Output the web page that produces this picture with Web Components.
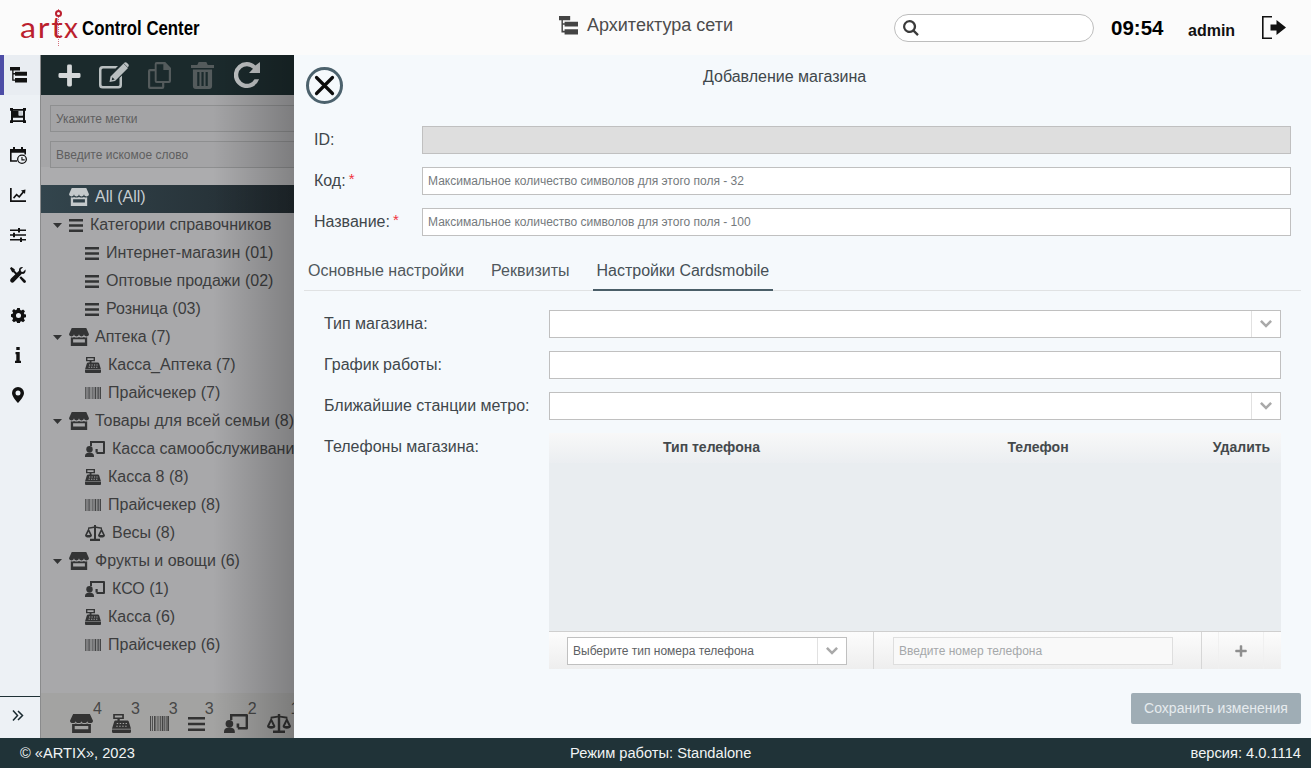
<!DOCTYPE html>
<html lang="ru">
<head>
<meta charset="utf-8">
<title>Artix Control Center</title>
<style>
  html, body { margin: 0; height: 100%; overflow: hidden; font-family: "Liberation Sans", Arial, sans-serif; }
</style>
</head>
<body>
<app-shell></app-shell>
<script>
const ICONS = {
  tree: ['0 0 17 16', '<path d="M0 0h10v3.600H3.500v2.400H5V4.800h12v4H5V7.400H3.500v5H5v-1.300h12V15.600H5v-1.800H2.200V3.600H0z"/>'],
  frame: ['0 0 16 16', '<path fill-rule="evenodd" d="M0 0h3v1h10V0h3v3h-1v10h1v3h-3v-1H3v1H0v-3h1V3H0zM3 3v10h10V3z"/><path d="M3 3h5.500v5H13v2.500H3z"/><path d="M9 3.500h3.500V8H9z" fill="#c9ced3"/>'],
  calendar: ['0 0 17 18', '<path d="M3 0h2v2h6V0h2v2h3v6h-1.600V6H1.600v8H7v1.600H0V2h3z"/><path fill-rule="evenodd" d="M12 8a5 5 0 1 1 0 10 5 5 0 0 1 0-10zm0 1.300a3.700 3.700 0 1 0 0 7.400 3.700 3.700 0 0 0 0-7.400z"/><path d="M11.400 10.500h1.100v2.600h2.200v1.100h-3.300z"/>'],
  chart: ['0 0 16 14', '<path d="M0 0h1.700v12.300H16V14H0z"/><path d="M3 9.500 6.500 5.500l2.600 2.200 3.300-3.900L11 2.500 15.500 1.600 15 6l-1.200-1.200-4.500 5.200-2.600-2.200-2.600 3z"/>'],
  sliders: ['0 0 16 14', '<path d="M0 1.500h8V0h2v1.500h6v1.600h-6v1.500H8V3.100H0zM0 6.200h3V4.700h2v1.500h11v1.600H5v1.500H3V7.800H0zM0 10.900h10V9.400h2v1.500h4v1.600h-4V14h-2v-1.500H0z"/>'],
  tools: ['0 0 16 16', '<path d="M0 1.300 1.300 0l3.400 2.200v1.600l3 3-1.400 1.400-3-3H2.200z"/><path d="M15.400 2.600 13 5l-2-.4L10.600 2.600 13 .2C11-.4 8.600 1 9 3.800L1 11.600C0 12.600-.2 14 .8 15s2.300.8 3.300-.2l7.800-8c2.800.6 4.200-2 3.500-4.200z"/><path d="M9.400 10.800 11 9.200l4.500 4.300c.6.600.6 1.400 0 2s-1.400.6-2 0z"/>'],
  gear: ['0 0 16 16', '<path fill-rule="evenodd" d="M6.600 0h2.800l.4 2.100 1.300.6 1.800-1.200 2 2-1.200 1.800.6 1.300 2.100.4v2.800l-2.100.4-.6 1.300 1.200 1.800-2 2-1.800-1.200-1.300.6-.4 2.100H6.600l-.4-2.100-1.300-.6-1.800 1.200-2-2 1.200-1.800-.6-1.300L0 9.400V6.600l1.700-.4.6-1.300-1.200-1.800 2-2 1.800 1.200 1.300-.6zM8 5.300a2.700 2.700 0 1 0 0 5.400 2.700 2.700 0 0 0 0-5.400z"/>'],
  info: ['0 0 6 16', '<path d="M1.300 0h3.400v3H1.300zM.5 5h4.200v8.800H6V16H0v-2.200h1.300V7.200H.5z"/>'],
  pin: ['0 0 12 16', '<path fill-rule="evenodd" d="M6 0a6 6 0 0 1 6 6c0 3-3.500 7.500-6 10C3.500 13.500 0 9 0 6a6 6 0 0 1 6-6zm0 3.500a2.500 2.500 0 1 0 0 5 2.500 2.500 0 0 0 0-5z"/>'],
  chevrons: ['0 0 12 11', '<path d="M1 .5 5.500 5.500 1 10.500M6 1 10.500 5.500 6 10" fill="none" stroke="currentColor" stroke-width="1.500"/>'],
  plus: ['0 0 24 24', '<path d="M9.500 2a1.500 1.500 0 0 1 1.500-1.500h2A1.500 1.500 0 0 1 14.500 2v7.500H22a1.500 1.500 0 0 1 1.500 1.500v2a1.500 1.500 0 0 1-1.500 1.500h-7.500V22a1.500 1.500 0 0 1-1.500 1.500h-2A1.500 1.500 0 0 1 9.500 22v-7.500H2A1.500 1.500 0 0 1 .5 13v-2A1.500 1.500 0 0 1 2 9.500h7.500z"/>'],
  edit: ['0 0 30 27', '<path d="M4 4h15l-2.500 2.500H4A1.500 1.500 0 0 0 2.500 8v14.500A1.500 1.500 0 0 0 4 24h15a1.500 1.500 0 0 0 1.500-1.500V16l2.500-2.500v9.500a3.500 3.500 0 0 1-3.500 3.500H3.500A3.500 3.500 0 0 1 0 23V7.500A3.500 3.500 0 0 1 3.500 4z"/><path d="M24.500 1.500 29 6 16 19l-5.500 1 1-5.500zM13.400 15.300l-.7 3 3-.7z"/><path d="M25.300.8c.8-.8 1.800-.8 2.500 0l1.500 1.500c.7.700.7 1.700 0 2.400l-.6.600-4-4z"/>'],
  copy: ['0 0 24 27', '<path fill-rule="evenodd" d="M9 0h9l6 6v13a2 2 0 0 1-2 2h-5v4a2 2 0 0 1-2 2H2a2 2 0 0 1-2-2V9a2 2 0 0 1 2-2h5V2a2 2 0 0 1 2-2zm0 2.300V19h12.700V8H16V2.300zM2.300 9.300V24.700h12.400V21H9a2 2 0 0 1-2-2V9.300z"/>'],
  trash: ['0 0 24 27', '<path fill-rule="evenodd" d="M8 0h8l1.500 3H24v3H0V3h6.500zM2 7.500h20V24a3 3 0 0 1-3 3H5a3 3 0 0 1-3-3zM6.500 10v14h2.300V10zm4.400 0v14h2.300V10zm4.300 0v14h2.300V10z"/>'],
  redo: ['0 0 26 26', '<path d="M13 0c3.300 0 6.200 1.300 8.400 3.400L26 0v11H15l4-4.200A8.500 8.500 0 0 0 13 4.300a8.700 8.700 0 1 0 7.500 13h4.600A13 13 0 1 1 13 0z"/>'],
  store: ['0 0 22 20', '<path d="M3 0h16l3 7q0 2.400-2.800 2.400T16.500 7q0 2.400-2.800 2.400T11 7q0 2.400-2.800 2.400T5.500 7q0 2.400-2.700 2.400T0 7z"/><path fill-rule="evenodd" d="M2 10.400q2.200.4 3.500-.5 2.700 1.200 5.500 0 2.800 1.200 5.500 0 1.300.9 3.500.5V20H2zM4.500 12.500v3.500h13v-3.500z"/>'],
  register: ['0 0 16 16', '<path fill-rule="evenodd" d="M1 0h9v4.200H6.500v1.300h6.300c.7 0 1.200.3 1.400 1l1.800 6H0l1.800-6c.2-.7.7-1 1.400-1H4.600V4.200H1zm1.400 1.300v1.600h6.200V1.300zM4 7.500v1h1.200v-1zm2.500 0v1h1.200v-1zm2.500 0v1h1.200v-1zm2.400 0v1h1.200v-1zM3.600 9.800v1h1.200v-1zm2.500 0v1h1.200v-1zm2.500 0v1h1.200v-1zm2.500 0v1h1.200v-1z"/><path d="M0 13h16v2a1 1 0 0 1-1 1H1a1 1 0 0 1-1-1z"/>'],
  barcode: ['0 0 16 12', '<path d="M0 0h.8v12H0zM1.600 0h.8v12h-.8zM3.400 0h1.300v12H3.400zM5.700 0h.6v12h-.6zM7.200 0h.6v12h-.6zM8.600 0h.8v12h-.8zM10 0h1.300v12H10zM12 0h.6v12H12zM13.200 0h.8v12h-.8zM14.600 0H16v12h-1.400z" opacity=".85"/>'],
  bars: ['0 0 14 13', '<path d="M0 0h14v2.400H0zM0 5.300h14v2.400H0zM0 10.600h14V13H0z"/>'],
  checkout: ['0 0 20 16', '<circle cx="4.500" cy="8.300" r="3.200"/><path d="M0 16v-1.300c0-2 1.700-3.300 4.500-3.300s4.500 1.300 4.500 3.300V16z"/><path d="M5 0h14a1 1 0 0 1 1 1v11a1 1 0 0 1-1 1h-7.500V11H18V2H7v3H5z"/><path d="M10.500 8h2.200v3.500h-2.200z"/>'],
  scales: ['0 0 20 16', '<path d="M9 0h2v1.400l6 1v1.600l-6-1V13.800h4V16H5v-2.200h4V3l-6 1V2.400l6-1z"/><path fill-rule="evenodd" d="M3.500 3 7 10.200c0 1.500-1.600 2.300-3.500 2.300S0 11.700 0 10.200zm0 3.700-1.600 3.400h3.200zM16.500 3 20 10.200c0 1.500-1.600 2.300-3.500 2.300S13 11.700 13 10.200zm0 3.700-1.600 3.400h3.200z"/>'],
  search: ['0 0 16 16', '<path fill-rule="evenodd" d="M6.500 0a6.500 6.500 0 0 1 5.300 10.300l4 4-1.600 1.600-4-4A6.500 6.500 0 1 1 6.500 0zm0 2.200a4.300 4.300 0 1 0 0 8.600 4.300 4.300 0 0 0 0-8.600z"/>'],
  logout: ['0 0 24 23', '<path d="M0 0h10v1.600H1.600v19.800H10V23H0z"/><path d="M8.500 8.500h6V4l9.500 7.500-9.500 7.500v-4.500h-6z"/>'],
  close: ['0 0 37 37', '<circle cx="18.500" cy="18.500" r="17" fill="none" stroke="#4c626d" stroke-width="3"/><path d="M10.500 10.500l16 16M26.500 10.500l-16 16" stroke="#0c0c0c" stroke-width="3.200" stroke-linecap="round" fill="none"/>'],
  chevron: ['0 0 12 8', '<path d="M1.800 0 6 4.200 10.200 0 12 1.800 6 7.800 0 1.800z"/>'],
  caret: ['0 0 9 5', '<path d="M0 0h9L4.500 5z"/>']
}

class UiIcon extends HTMLElement {
  constructor () {
    super()
    const [box, body] = ICONS[this.getAttribute('name')]
    const w = this.getAttribute('w')
    const h = this.getAttribute('h') || w
    this.attachShadow({mode: 'open'}).innerHTML = `
      <style>:host { display: inline-flex; flex: none; width: ${w}px; height: ${h}px; } svg { display: block; width: 100%; height: 100%; fill: currentColor; }</style>
      <svg viewBox="${box}" preserveAspectRatio="none">${body}</svg>`
  }
}

class AppHeader extends HTMLElement {
  constructor () {
    super()
    this.attachShadow({mode: 'open'}).innerHTML = `
      <style>
        :host { display: grid; grid-template-columns: 559px 335px 1fr; align-items: center; height: 55px; background: #fbfbfb; }
        .brand { display: flex; align-items: center; padding-left: 20px; }
        .logo { position: relative; display: flex; width: 57px; height: 30px; color: #bb1f2e; font: 400 28px/30px Lato, sans-serif; letter-spacing: 1.500px; transform: translateY(-1px); }
        .logo span { display: block; transform: scaleX(1.150); transform-origin: left; }
        .logo i { font-style: normal; position: absolute; left: 44px; top: 0; }
        .dots { position: absolute; left: 38px; top: -3px; height: 37px; border-left: 1px dotted #d4707c; }
        .ring { position: absolute; left: 35px; top: -2px; width: 3px; height: 3px; border: 2px solid #bb1f2e; border-radius: 50%; background: #fbfbfb; }
        .app { margin-left: 5px; font: bold 20px/24px "Liberation Sans", sans-serif; color: #000; transform: scaleX(.84); transform-origin: left; white-space: nowrap; }
        .page { display: flex; align-items: center; gap: 9px; color: #4c4c4c; font-size: 18px; transform: translateY(-2px); }
        .page ui-icon { color: #444; }
        .right { display: flex; align-items: center; }
        .search { box-sizing: border-box; width: 200px; height: 28px; padding-left: 8px; display: flex; align-items: center; background: #fff; border: 1px solid #bdbdbd; border-radius: 14px; color: #3a3a3a; }
        .time { margin-left: 17px; width: 55px; font: bold 20.500px "Liberation Sans", sans-serif; color: #000; }
        .user { margin-left: 22px; font: bold 16px "Liberation Sans", sans-serif; color: #111; transform: translateY(3px); }
        .exit { margin-left: 27px; color: #111; display: flex; }
      </style>
      <div class="brand">
        <div class="logo"><span>art</span><i>x</i><b class="dots"></b><b class="ring"></b></div>
        <div class="app">Control Center</div>
      </div>
      <div class="page"><ui-icon name="tree" w="19" h="19"></ui-icon><span>Архитектура сети</span></div>
      <div class="right">
        <div class="search"><ui-icon name="search" w="16"></ui-icon></div>
        <div class="time">09:54</div>
        <div class="user">admin</div>
        <div class="exit"><ui-icon name="logout" w="24" h="23"></ui-icon></div>
      </div>`
  }
}

class SideRail extends HTMLElement {
  constructor () {
    super()
    const items = [['tree', 17, 16], ['frame', 16, 15], ['calendar', 17, 17], ['chart', 16, 14], ['sliders', 16, 14], ['tools', 16, 16], ['gear', 15, 15], ['info', 6, 16], ['pin', 12, 16]]
    const rows = items.map(([n, w, h], i) => `<div class="item ${i === 0 ? 'on' : ''}"><ui-icon name="${n}" w="${w}" h="${h}"></ui-icon></div>`).join('')
    this.attachShadow({mode: 'open'}).innerHTML = `
      <style>
        :host { display: flex; flex-direction: column; width: 40px; flex: none; background: #edf1f5; color: #111; }
        .item { display: flex; align-items: center; justify-content: center; height: 40px; box-sizing: border-box; padding-right: 4px; }
        .on { border-left: 4px solid #4d4da6; padding-right: 8px; background: #e9edf2; }
        .more { margin-top: auto; height: 42px; box-sizing: border-box; border-top: 1px solid #1f3136; display: flex; align-items: center; justify-content: center; padding: 0 4px 4px 0; color: #1a2a30; }
      </style>
      ${rows}
      <div class="more"><ui-icon name="chevrons" w="12" h="11"></ui-icon></div>`
  }
}

class TreeRow extends HTMLElement {
  constructor () {
    super()
    const icon = this.getAttribute('icon')
    const sizes = {store: [20, 18], bars: [14, 13], register: [16, 16], barcode: [16, 12], checkout: [20, 16], scales: [20, 16]}
    const [w, h] = sizes[icon]
    const root = this.hasAttribute('root')
    this.attachShadow({mode: 'open'}).innerHTML = `
      <style>
        :host { display: flex; align-items: center; gap: ${icon === 'store' ? 6 : 7}px; box-sizing: border-box; height: 28px; padding: 0 0 6px ${root ? 12 : 44}px; color: #3c3d3e; font-size: 16px; line-height: 22px; white-space: nowrap; }
        :host([selected]) { padding-left: 28px; color: #c6cdd1; background: linear-gradient(to right, #33454d, #222b30); }
        .caret { display: flex; width: 9px; margin-right: ${icon === 'store' ? 1 : 0}px; }
        span:last-child { position: relative; top: 1px; }
        ui-icon { color: #333435; position: relative; top: 1px; }
        :host([selected]) ui-icon { color: #c4c9cb; }
      </style>
      ${root ? '<span class="caret"><ui-icon name="caret" w="9" h="5"></ui-icon></span>' : ''}
      <ui-icon name="${icon}" w="${w}" h="${h}"></ui-icon>
      <span><slot></slot></span>`
  }
}

class BottomCount extends HTMLElement {
  constructor () {
    super()
    const icon = this.getAttribute('icon')
    const w = this.getAttribute('w')
    const h = this.getAttribute('h')
    this.attachShadow({mode: 'open'}).innerHTML = `
      <style>
        :host { display: flex; align-items: flex-end; flex: none; margin-right: 10px; color: #333; }
        ui-icon { margin-bottom: ${(19 - h) / 2}px; }
        sup { font-size: 16px; line-height: 18px; color: #474747; margin: 0 0 15px 0; vertical-align: baseline; }
      </style>
      <ui-icon name="${icon}" w="${w}" h="${h}"></ui-icon>
      <sup><slot></slot></sup>`
  }
}

class TreePanel extends HTMLElement {
  constructor () {
    super()
    this.attachShadow({mode: 'open'}).innerHTML = `
      <style>
        :host { position: relative; display: flex; flex-direction: column; width: 254px; flex: none; overflow: hidden; background: #a8a8aa; border-left: 1px solid #8a8b8c; box-sizing: border-box; }
        .tools { display: flex; align-items: center; height: 40px; flex: none; background: #1b2a2c; padding-left: 17px; }
        .tools ui-icon:nth-child(1) { color: #d5d8d9; margin-right: 18px; }
        .tools ui-icon:nth-child(2) { color: #b9bfc0; margin-right: 19px; }
        .tools ui-icon:nth-child(3) { color: #545b5c; margin-right: 20px; }
        .tools ui-icon:nth-child(4) { color: #545b5c; margin-right: 20px; }
        .tools ui-icon:nth-child(5) { color: #c3c6c7; }
        .filters { height: 90px; flex: none; box-sizing: border-box; padding: 10px 0 0 9px; display: flex; flex-direction: column; gap: 9px; background: linear-gradient(#a6a6a8 80%, #acacae 80%); }
        .box { box-sizing: border-box; width: 300px; height: 27px; border: 1px solid #8e8f90; background: #a4a4a6; padding-left: 5px; font-size: 12px; line-height: 26px; color: #5f5f60; }
        .rows { flex: 1; }
        .foot { display: flex; height: 45px; flex: none; padding-left: 29px; box-sizing: border-box; padding-bottom: 5px; background: #a3a3a2; }
        .fade { position: absolute; inset: 0; pointer-events: none; background: linear-gradient(to right, transparent 68%, rgba(0,0,0,.24) 100%); }
      </style>
      <div class="tools">
        <ui-icon name="plus" w="23" h="23"></ui-icon>
        <ui-icon name="edit" w="30" h="27"></ui-icon>
        <ui-icon name="copy" w="23" h="27"></ui-icon>
        <ui-icon name="trash" w="23" h="27"></ui-icon>
        <ui-icon name="redo" w="26" h="26"></ui-icon>
      </div>
      <div class="filters">
        <div class="box">Укажите метки</div>
        <div class="box">Введите искомое слово</div>
      </div>
      <div class="rows"><slot></slot></div>
      <div class="foot"><slot name="foot"></slot></div>
      <div class="fade"></div>`
  }
}

class FormField extends HTMLElement {
  constructor () {
    super()
    const star = this.hasAttribute('required') ? '<em>*</em>' : ''
    this.attachShadow({mode: 'open'}).innerHTML = `
      <style>
        :host { display: flex; align-items: center; height: 28px; margin: 0 20px 13px; color: #3f474b; font-size: 16px; }
        label { display: flex; width: 108px; flex: none; }
        em { font-style: normal; color: #f0323c; font-size: 15px; margin-left: 3px; line-height: 14px; }
        .box { flex: 1; box-sizing: border-box; height: 28px; background: #fff; border: 1px solid #c0c0c0; padding-left: 5px; color: #757a7d; font-size: 12px; line-height: 27px; }
        :host([disabled]) .box { background: #dedede; }
      </style>
      <label><slot name="label"></slot>${star}</label>
      <div class="box"><slot></slot></div>`
  }
}

class SelectBox extends HTMLElement {
  constructor () {
    super()
    const arrow = this.hasAttribute('plain') ? '' : '<div class="arrow"><ui-icon name="chevron" w="12" h="8"></ui-icon></div>'
    this.attachShadow({mode: 'open'}).innerHTML = `
      <style>
        :host { display: flex; box-sizing: border-box; height: 28px; background: #fff; border: 1px solid #c0c0c0; font-size: 12px; color: #5d6164; }
        .text { flex: 1; padding-left: 5px; line-height: 27px; white-space: nowrap; overflow: hidden; }
        .arrow { width: 28px; display: flex; align-items: center; justify-content: center; border-left: 1px solid #e1e1e1; color: #a9a9a9; }
      </style>
      <div class="text"><slot></slot></div>${arrow}`
  }
}

class SettingRow extends HTMLElement {
  constructor () {
    super()
    this.attachShadow({mode: 'open'}).innerHTML = `
      <style>
        :host { display: grid; grid-template-columns: 225px 732px; margin-bottom: 13px; color: #3f474b; font-size: 16px; }
        .label { line-height: 27px; }
      </style>
      <div class="label"><slot name="label"></slot></div>
      <div><slot></slot></div>`
  }
}

class PhoneTable extends HTMLElement {
  constructor () {
    super()
    this.attachShadow({mode: 'open'}).innerHTML = `
      <style>
        :host { display: flex; flex-direction: column; height: 236px; background: #e9edf0; }
        .row { display: grid; grid-template-columns: 325px 328px 79px; }
        .head { height: 30px; box-sizing: border-box; padding-bottom: 2px; align-items: center; text-align: center; font-size: 14px; font-weight: bold; color: #44494c; background: linear-gradient(#f8f8f8, #ebeef1); }
        .body { flex: 1; }
        .foot { height: 38px; box-sizing: border-box; border-top: 1px solid #cfcfcf; background: linear-gradient(#fcfcfc, #eeeeee); }
        .cell { display: flex; align-items: center; box-sizing: border-box; border-right: 1px solid #d6d6d6; }
        .cell:nth-child(1) { padding-left: 18px; }
        .cell:nth-child(2) { padding-left: 19px; }
        .cell:last-child { border-right: 0; padding-left: 16px; }
        select-box { width: 280px; }
        .phone { box-sizing: border-box; width: 280px; height: 28px; border: 1px solid #dedede; background: #f9f9f9; font-size: 12px; line-height: 27px; padding-left: 5px; color: #a5a8aa; }
        .add { box-sizing: border-box; width: 46px; height: 100%; display: flex; align-items: center; justify-content: center; border: 1px solid #f0f0f0; border-width: 0 1px; color: #8e8e8e; }
      </style>
      <div class="row head"><div>Тип телефона</div><div>Телефон</div><div>Удалить</div></div>
      <div class="body"></div>
      <div class="row foot">
        <div class="cell"><select-box>Выберите тип номера телефона</select-box></div>
        <div class="cell"><div class="phone">Введите номер телефона</div></div>
        <div class="cell"><div class="add"><ui-icon name="plus" w="12" h="12"></ui-icon></div></div>
      </div>`
  }
}

class StoreDrawer extends HTMLElement {
  constructor () {
    super()
    this.attachShadow({mode: 'open'}).innerHTML = `
      <style>
        :host { display: flex; flex-direction: column; flex: 1; min-width: 0; background: #f5f9fc; }
        .head { display: flex; align-items: flex-start; padding: 12px 0 0 12px; height: 37px; margin-bottom: 22px; }
        .close { color: #111; }
        h1 { margin: 0 0 0 360px; font-size: 16px; font-weight: normal; line-height: 20px; color: #3f474b; }
        .tabs { display: flex; gap: 19px; margin: 3px 10px 19px; height: 39px; border-bottom: 1px solid #e0e2e3; box-sizing: border-box; font-size: 16px; color: #50585c; }
        .tab { padding: 8px 4px 0; height: 38px; box-sizing: border-box; line-height: 22px; white-space: nowrap; }
        .tab.on { border-bottom: 2px solid #4a5e68; height: 39px; color: #465056; }
        .sub { padding: 0 30px; }
        .save { align-self: flex-end; margin: 11px 10px 0 0; width: 170px; height: 31px; line-height: 31px; text-align: center; background: #9fadb5; color: #e6ebee; font-size: 14px; border-radius: 2px; }
      </style>
      <div class="head"><ui-icon class="close" name="close" w="37" h="37"></ui-icon><h1>Добавление магазина</h1></div>
      <form-field disabled><span slot="label">ID:</span></form-field>
      <form-field required><span slot="label">Код:</span>Максимальное количество символов для этого поля - 32</form-field>
      <form-field required><span slot="label">Название:</span>Максимальное количество символов для этого поля - 100</form-field>
      <div class="tabs">
        <div class="tab">Основные настройки</div>
        <div class="tab">Реквизиты</div>
        <div class="tab on">Настройки Cardsmobile</div>
      </div>
      <div class="sub">
        <setting-row><span slot="label">Тип магазина:</span><select-box></select-box></setting-row>
        <setting-row><span slot="label">График работы:</span><select-box plain></select-box></setting-row>
        <setting-row><span slot="label">Ближайшие станции метро:</span><select-box></select-box></setting-row>
        <setting-row><span slot="label">Телефоны магазина:</span><phone-table></phone-table></setting-row>
      </div>
      <div class="save">Сохранить изменения</div>`
  }
}

class AppFooter extends HTMLElement {
  constructor () {
    super()
    this.attachShadow({mode: 'open'}).innerHTML = `
      <style>
        :host { display: flex; justify-content: space-between; align-items: center; height: 30px; padding: 0 10px 0 20px; background: #203338; color: #f1f3f4; font-size: 14.670px; }
        .mode { margin-right: 4px; }
      </style>
      <span>© «ARTIX», 2023</span>
      <span class="mode">Режим работы: Standalone</span>
      <span>версия: 4.0.1114</span>`
  }
}

class AppShell extends HTMLElement {
  constructor () {
    super()
    const rows = [
      ['store', 'All (All)', 'selected'],
      ['bars', 'Категории справочников', 'root'],
      ['bars', 'Интернет-магазин (01)'],
      ['bars', 'Оптовые продажи (02)'],
      ['bars', 'Розница (03)'],
      ['store', 'Аптека (7)', 'root'],
      ['register', 'Касса_Аптека (7)'],
      ['barcode', 'Прайсчекер (7)'],
      ['store', 'Товары для всей семьи (8)', 'root'],
      ['checkout', 'Касса самообслуживания (8)'],
      ['register', 'Касса 8 (8)'],
      ['barcode', 'Прайсчекер (8)'],
      ['scales', 'Весы (8)'],
      ['store', 'Фрукты и овощи (6)', 'root'],
      ['checkout', 'КСО (1)'],
      ['register', 'Касса (6)'],
      ['barcode', 'Прайсчекер (6)']
    ].map(([icon, text, flag]) => `<tree-row icon="${icon}" ${flag || ''}>${text}</tree-row>`).join('')
    const counts = [['store', 23, 19, 4], ['register', 19, 19, 3], ['barcode', 19, 15, 3], ['bars', 17, 14, 3], ['checkout', 24, 19, 2], ['scales', 24, 19, 1]]
      .map(([icon, w, h, n]) => `<bottom-count slot="foot" icon="${icon}" w="${w}" h="${h}">${n}</bottom-count>`).join('')
    this.attachShadow({mode: 'open'}).innerHTML = `
      <style>
        :host { display: flex; flex-direction: column; width: 1311px; height: 768px; }
        main { display: flex; height: 683px; }
      </style>
      <app-header></app-header>
      <main>
        <side-rail></side-rail>
        <tree-panel>${rows}${counts}</tree-panel>
        <store-drawer></store-drawer>
      </main>
      <app-footer></app-footer>`
  }
}

customElements.define('ui-icon', UiIcon)
customElements.define('app-header', AppHeader)
customElements.define('side-rail', SideRail)
customElements.define('tree-row', TreeRow)
customElements.define('bottom-count', BottomCount)
customElements.define('tree-panel', TreePanel)
customElements.define('form-field', FormField)
customElements.define('select-box', SelectBox)
customElements.define('setting-row', SettingRow)
customElements.define('phone-table', PhoneTable)
customElements.define('store-drawer', StoreDrawer)
customElements.define('app-footer', AppFooter)
customElements.define('app-shell', AppShell)
</script>
</body>
</html>
